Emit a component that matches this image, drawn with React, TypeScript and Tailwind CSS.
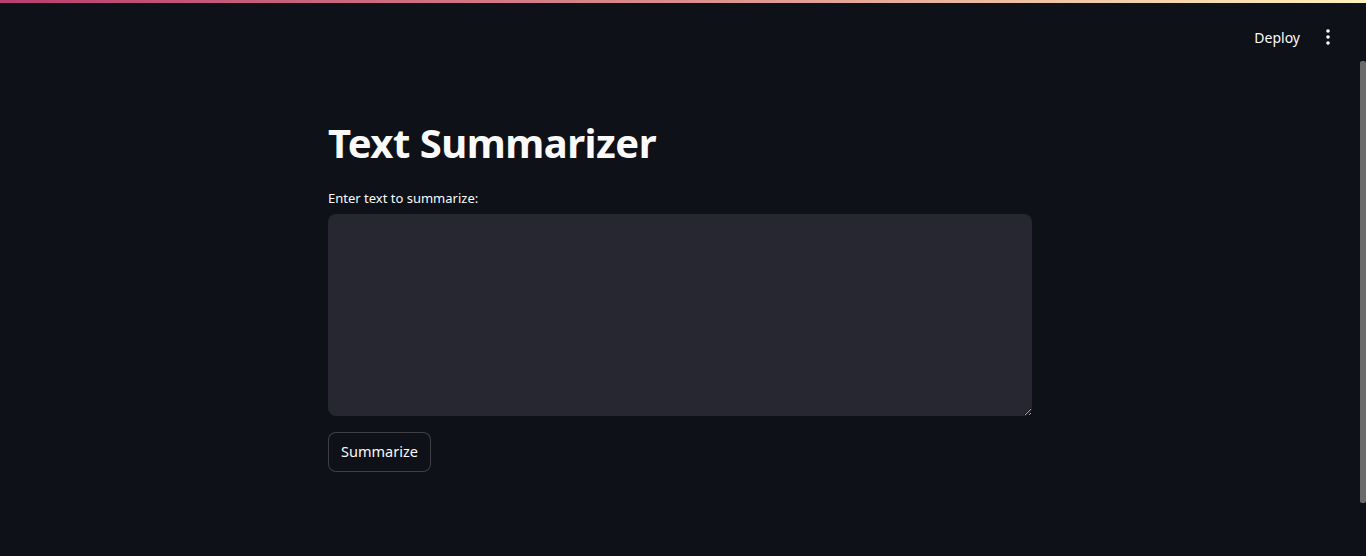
import React from 'react';

export default function App() {
  return (
    <div className="relative h-[556px] w-full overflow-hidden bg-[#0e1117] text-[#fafafa] [font-family:'Noto_Sans',sans-serif]">
      {/* decoration bar */}
      <div className="h-[3px] w-full bg-gradient-to-r from-[#b83f6f] via-[#dc8e8e] to-[#fdf3ba]" />

      {/* header */}
      <div className="flex h-[68px] items-center justify-end pr-[22px]">
        <button className="px-3 text-[14px] text-[#fafafa]">Deploy</button>
        <button className="flex h-8 w-8 items-center justify-center">
          <svg width="4" height="16" viewBox="0 0 4 16" fill="#fafafa">
            <circle cx="2" cy="2" r="1.8" />
            <circle cx="2" cy="8" r="1.8" />
            <circle cx="2" cy="14" r="1.8" />
          </svg>
        </button>
      </div>

      {/* scrollbar */}
      <div className="absolute right-[0px] top-[61px] h-[442px] w-[6px] rounded-[2px] bg-[#6b6b6b]" />

      {/* main */}
      <div className="mx-auto w-[704px] -translate-x-[3px] pt-[48px]">
        <h1 className="text-[40px] font-bold leading-[1.2] tracking-[-0.5px]">Text Summarizer</h1>
        <label className="mt-[22px] block text-[13px] leading-[18px]">Enter text to summarize:</label>
        <textarea className="mt-[7px] block h-[202px] w-full resize-y rounded-[8px] bg-[#262730] p-3 text-[16px] outline-none" />
        <button className="mt-[16px] h-[40px] rounded-[8px] border border-[rgba(250,250,250,0.2)] bg-[#0e1117] px-[12px] text-[14.5px]">
          Summarize
        </button>
      </div>
    </div>
  );
}
